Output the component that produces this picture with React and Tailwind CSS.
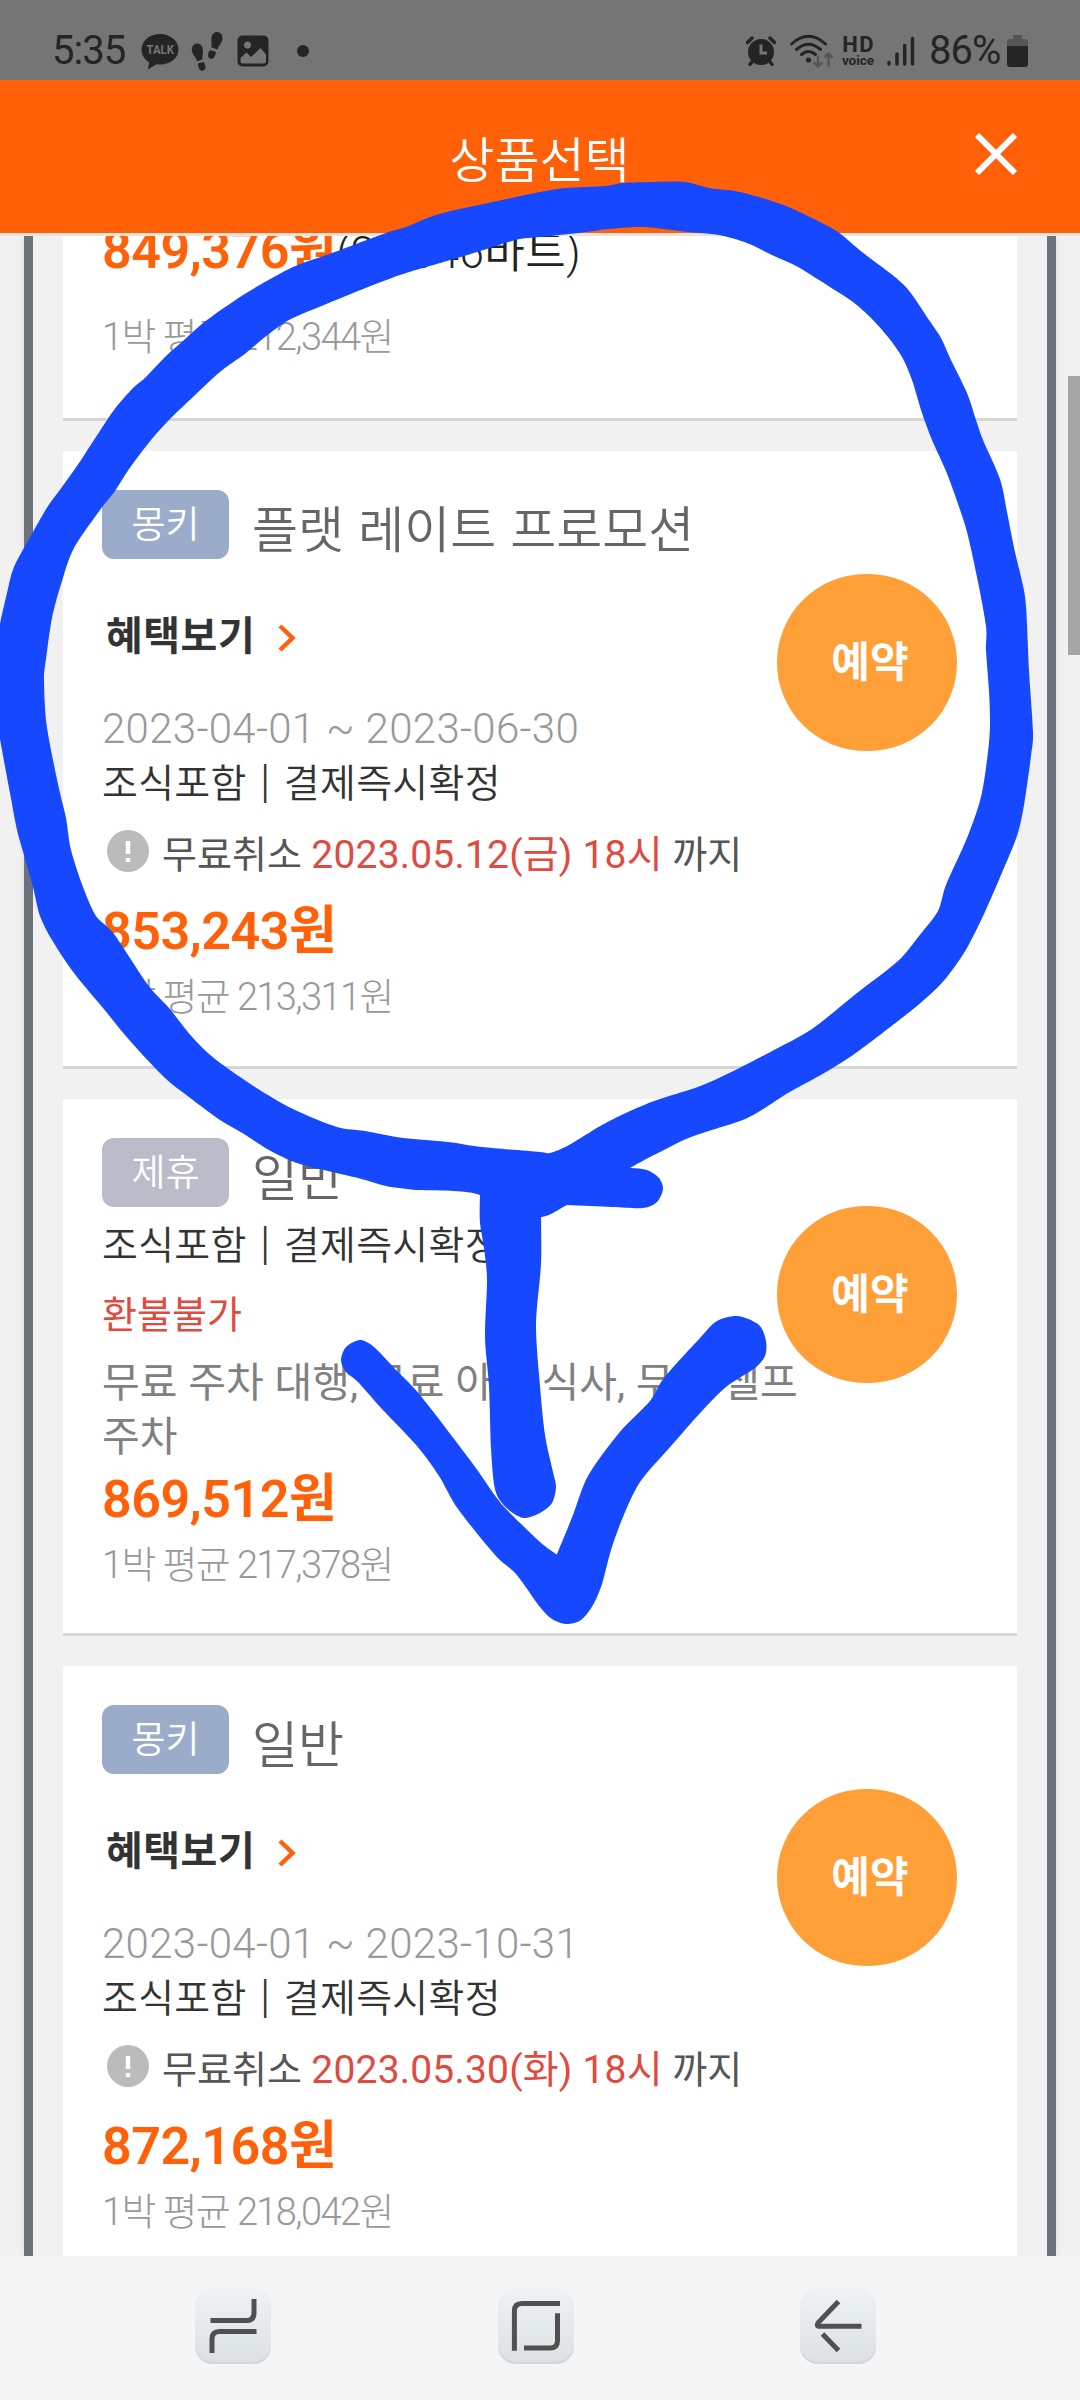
import { useState } from 'react';
import { clsx } from 'clsx';

const RATES = [
  {
    id: 1,
    badge: '몽키',
    badgeColor: 'bg-[#9aacc9]',
    title: '플랫 레이트 프로모션',
    hasBenefit: true,
    period: '2023-04-01 ~ 2023-06-30',
    cancelBefore: '2023.05.12(금) 18시',
    price: '853,243원',
    average: '1박 평균 213,311원',
    height: 'h-[618px]',
    buttonTop: 'top-[123px]'
  },
  {
    id: 2,
    badge: '제휴',
    badgeColor: 'bg-[#babcca]',
    title: '일반',
    note: '무료 주차 대행, 무료 아침 식사, 무료 셀프 주차',
    price: '869,512원',
    average: '1박 평균 217,378원',
    height: 'h-[537px]',
    buttonTop: 'top-[107px]'
  },
  {
    id: 3,
    badge: '몽키',
    badgeColor: 'bg-[#9aacc9]',
    title: '일반',
    hasBenefit: true,
    period: '2023-04-01 ~ 2023-10-31',
    cancelBefore: '2023.05.30(화) 18시',
    price: '872,168원',
    average: '1박 평균 218,042원',
    height: 'h-[618px]',
    buttonTop: 'top-[123px]'
  }
];

// Outlines of the marker strokes, x/y pairs in page pixels
const RING_OUTER = [
  -5, 680, -3, 645, 0, 624, 7, 593, 14, 567, 33, 532, 48, 506, 62, 487, 79, 463, 94, 440, 114, 410, 133, 388,
  146, 377, 165, 357, 184, 340, 207, 320, 248, 292, 293, 267, 332, 253, 386, 233, 406, 227, 430, 217, 451, 211,
  479, 205, 540, 192, 566, 188, 605, 186, 623, 183, 654, 182, 685, 182, 709, 188, 740, 192, 781, 204, 812, 218,
  838, 232, 862, 252, 895, 277, 910, 292, 929, 320, 941, 338, 950, 358, 967, 393, 976, 420, 983, 440, 1000, 479,
  1007, 512, 1015, 552, 1022, 581, 1026, 606, 1029, 671, 1033, 732, 1031, 756, 1024, 805, 1017, 836, 1001, 875,
  984, 914, 967, 948, 953, 969, 938, 987, 912, 1010, 860, 1050, 831, 1069, 808, 1082, 788, 1093, 760, 1111,
  740, 1121, 691, 1137, 660, 1152, 630, 1168, 595, 1190, 567, 1205, 542, 1217, 510, 1212, 480, 1195, 454, 1191,
  417, 1190, 386, 1186, 358, 1178, 300, 1164, 269, 1150, 244, 1134, 220, 1120, 189, 1097, 165, 1078, 131, 1042,
  103, 1008, 74, 973, 52, 940, 40, 916, 33, 887, 24, 855, 17, 830, 10, 793, 2, 750, -4, 715
];
const RING_INNER = [
  151, 440, 129, 469, 115, 491, 100, 510, 74, 548, 62, 581, 52, 618, 46, 659, 44, 679, 46, 720, 52, 755, 60, 793,
  66, 818, 71, 850, 83, 887, 96, 916, 114, 934, 148, 985, 169, 1008, 193, 1038, 215, 1059, 255, 1087, 293, 1109,
  337, 1127, 365, 1131, 403, 1138, 448, 1142, 482, 1147, 540, 1152, 550, 1153, 569, 1145, 602, 1125, 630, 1111,
  657, 1100, 695, 1088, 721, 1077, 755, 1060, 774, 1050, 812, 1029, 857, 993, 898, 961, 919, 936, 938, 911,
  946, 885, 967, 838, 981, 797, 988, 752, 990, 724, 989, 691, 986, 650, 986, 626, 977, 577, 967, 532, 957, 501,
  946, 471, 932, 440, 922, 413, 912, 380, 902, 357, 888, 337, 871, 318, 853, 302, 833, 289, 798, 267, 774, 256,
  747, 243, 719, 235, 688, 232, 643, 227, 609, 229, 578, 233, 540, 237, 520, 239, 499, 245, 461, 257, 406, 273,
  368, 287, 324, 305, 289, 320, 265, 337, 246, 353, 220, 372, 193, 397, 169, 420
];
const RING_TAIL = [
  520, 1165, 600, 1167, 630, 1168, 647, 1170, 659, 1178, 663, 1189, 657, 1202, 643, 1208, 612, 1207, 567, 1205, 520, 1202
];
const ARROW_STEM = [
  482, 1165, 480, 1195, 480, 1223, 484, 1248, 487, 1280, 485, 1337, 489, 1386, 491, 1448, 494, 1484, 499, 1499, 510, 1511,
  524, 1518, 540, 1513, 552, 1503, 556, 1487, 553, 1472, 545, 1435, 540, 1386, 536, 1325, 541, 1264, 541, 1215, 541, 1165
];
const ARROW_HEAD = [
  360, 1340, 346, 1347, 341, 1360, 346, 1372, 358, 1382, 382, 1409, 417, 1446, 439, 1476, 458, 1509, 496, 1556,
  516, 1574, 540, 1607, 552, 1619, 566, 1624, 581, 1620, 593, 1605, 602, 1584, 611, 1550, 623, 1517, 640, 1482,
  671, 1446, 702, 1411, 726, 1387, 755, 1368, 765, 1356, 766, 1341, 759, 1325, 738, 1316, 717, 1321, 700, 1338,
  664, 1378, 650, 1401, 619, 1433, 588, 1476, 573, 1515, 557, 1554, 556, 1554, 540, 1542, 510, 1513, 496, 1497,
  470, 1460, 420, 1395, 396, 1370, 374, 1347
];

// Closed Catmull-Rom spline through the points
function smoothPath(flat) {
  const pts = [];
  for (let i = 0; i < flat.length; i += 2) pts.push([flat[i], flat[i + 1]]);
  const at = (i) => pts[(i + pts.length) % pts.length];
  let d = `M${pts[0][0]} ${pts[0][1]}`;
  pts.forEach((p1, i) => {
    const p0 = at(i - 1);
    const p2 = at(i + 1);
    const p3 = at(i + 2);
    d += `C${p1[0] + (p2[0] - p0[0]) / 7} ${p1[1] + (p2[1] - p0[1]) / 7} ${p2[0] - (p3[0] - p1[0]) / 7} ${p2[1] - (p3[1] - p1[1]) / 7} ${p2[0]} ${p2[1]}`;
  });
  return `${d}Z`;
}

function MarkerDrawing() {
  return (
    <svg
      viewBox="0 0 1080 2400"
      className="absolute inset-0 w-[1080px] h-[2400px] pointer-events-none"
      fill="#1548ff"
    >
      <path fillRule="evenodd" d={smoothPath(RING_OUTER) + smoothPath(RING_INNER)} />
      <path d={smoothPath(RING_TAIL)} />
      <path d={smoothPath(ARROW_STEM)} />
      <path d={smoothPath(ARROW_HEAD)} />
    </svg>
  );
}

function StatusBar() {
  return (
    <div className="h-20 shrink-0 bg-[#757575] text-[#242424] flex items-start justify-between pl-[53px] pr-[52px] pt-[30px]">
      <div className="flex items-center h-[42px]">
        <span className="text-[40px] leading-[44px] w-[77px] -ml-px tracking-[-1px]">5:35</span>
        {/* Talk bubble */}
        <svg className="w-[38px] h-[38px] ml-[12px]" viewBox="0 0 38 38">
          <path
            d="M19 2C8.500 2 .5 8.800.5 17.500c0 5.500 3 10 7.800 12.800L6.800 37.500l8.700-5.300c1.100.2 2.300.3 3.500.3 10.500 0 18.500-6.500 18.500-15S29.500 2 19 2z"
            fill="#242424"
          />
          <text
            x="5.500"
            y="22"
            fontSize="13.500"
            fontWeight="700"
            fill="#757575"
            fontFamily="Roboto, sans-serif"
            textLength="27.500"
            lengthAdjust="spacingAndGlyphs"
          >
            TALK
          </text>
        </svg>
        {/* Footprints */}
        <svg className="w-[32px] h-[42px] ml-[12px]" viewBox="0 0 32 42" fill="#242424">
          <path d="M5.500 13.500c3.500-.8 6.500 2.500 6.500 7.500 0 3-1 5-.5 8.500l-5.500 1.700C5.500 27.500.8 24.500.8 19.500c0-3 1.700-5.500 4.700-6z" />
          <path d="M7 33.500l5.500-1.500c1 1 2 3 2 5.500 0 1.500-1 3-2.800 3.300C9 41.200 7 38 7 33.500z" />
          <path d="M26.500 2c-3.500-.5-6 2.500-6.200 7-.1 3 .7 5 0 8.300l6.200 2.200c1-4 4.700-6 5-11 .2-3.500-2-6.200-5-6.500z" />
          <path d="M25 22l-5.800-2c-1.500 1.500-2.200 3.500-2.200 5.500 0 1.500 1 3 2.800 3.300C22.500 29.200 24.500 26 25 22z" />
        </svg>
        {/* Gallery */}
        <svg className="w-[32px] h-[32px] ml-[14px]" viewBox="0 0 32 32">
          <rect x="0.500" y="0.500" width="31" height="31" rx="5" fill="#242424" />
          <circle cx="10.500" cy="10" r="3.500" fill="#757575" />
          <path d="M3.500 23l6-5.500 4.500 4.500 9.500-9 5.500 6.500v6.500q0 2.500-2.500 2.500h-20.500q-2.500 0-2.500-2.500z" fill="#757575" />
        </svg>
        <span className="size-3 rounded-full bg-[#242424] ml-[28px]" />
      </div>

      <div className="flex items-center h-[42px]">
        {/* Alarm */}
        <svg className="w-[30px] h-[30px]" viewBox="0 0 30 30">
          <circle cx="15" cy="16" r="13" fill="#242424" />
          <path d="M1.500 6.500L6 2M28.500 6.500L24 2M4 28.500l3-4M26 28.500l-3-4" stroke="#242424" strokeWidth="3.500" strokeLinecap="round" />
          <path d="M15 8.500V17h6" fill="none" stroke="#757575" strokeWidth="3" />
        </svg>
        {/* Wifi */}
        <svg className="w-[46px] h-[38px] ml-[13px]" viewBox="0 0 46 38" fill="none">
          <path d="M2.500 12q17-15.500 34 0M7.500 17.500q12-10.500 24 0M12.500 22.500q7-6 14 0" stroke="#242424" strokeWidth="3" strokeLinecap="round" />
          <circle cx="19.500" cy="28" r="2.600" fill="#242424" />
          <path d="M29 24v10M25 30.500l4 4 4-4M39.500 34.500v-12M35.500 25.500l4-4 4 4" stroke="#555" strokeWidth="2.500" />
        </svg>
        <div className="w-8 ml-[7px] flex flex-col items-center font-bold">
          <span className="text-[22px] leading-[18px] tracking-[1.500px] pl-[1.500px]">HD</span>
          <span className="text-[13.500px] leading-[12px]">voice</span>
        </div>
        {/* Signal */}
        <svg className="w-[28px] h-[30px] ml-[13px]" viewBox="0 0 28 30" stroke="#242424" strokeWidth="3.500" strokeLinecap="round">
          <path d="M2 26.500v1.500M10 18v10M17.700 9.500v18.500M25.500 2.500v25.500" />
        </svg>
        <span className="text-[40px] leading-[44px] ml-[14px] w-[72px] tracking-[-1px]">86%</span>
        <svg className="w-[21px] h-[32px] ml-[6px]" viewBox="0 0 21 32">
          <path d="M6 0h9v4h3q3 0 3 3v5H0V7q0-3 3-3h3z" fill="#555" />
          <path d="M0 11h21v18q0 3-3 3H3q-3 0-3-3z" fill="#242424" />
        </svg>
      </div>
    </div>
  );
}

function Header({ title }) {
  return (
    <header className="h-[156px] shrink-0 bg-[#ff6008] border-b-3 border-[#ebe3dc] grid grid-cols-[1fr_auto_1fr] items-start text-white">
      <span />
      <h1 className="text-[49px] leading-[60px] font-[350] mt-[52px] -ml-px">{title}</h1>
      <button className="justify-self-end mt-[53px] mr-[63px]">
        <svg className="size-[42px]" viewBox="0 0 42 42" stroke="#fff" strokeWidth="6">
          <path d="M2 2l38 38M40 2L2 40" />
        </svg>
      </button>
    </header>
  );
}

function Average({ children }) {
  return (
    <p className="text-[38px] leading-[54px] font-light text-[#999] tracking-[-1.600px]">{children}</p>
  );
}

function Price({ children }) {
  return <span className="text-[52px] leading-[66px] font-semibold text-[#ff6008] tracking-[-0.500px]">{children}</span>;
}

function RateCard({ rate }) {
  return (
    <section
      className={clsx('relative shrink-0 bg-white border-b-3 border-[#d6d6d6] pl-[39px] pt-[39px] whitespace-nowrap', rate.height)}
    >
      <div className="flex h-[69px]">
        <span
          className={clsx(
            'w-[127px] h-[69px] rounded-xl text-white text-[37px] leading-[72px] font-[350] text-center',
            rate.badgeColor
          )}
        >
          {rate.badge}
        </span>
        <h2 className="ml-[23px] pt-[7px] text-[50px] leading-[69px] font-[350] text-[#666] [word-spacing:2px]">{rate.title}</h2>
      </div>

      {rate.hasBenefit && (
        <div className="flex items-center h-[60px] mt-[48px] pl-1">
          <span className="text-[40px] leading-[60px] font-bold text-[#333] tracking-[0.500px]">혜택보기</span>
          <svg className="w-[18px] h-[28px] ml-[23px] mt-[1px]" viewBox="0 0 18 28" fill="none" stroke="#ff6008" strokeWidth="4.500">
            <path d="M2 2l12.500 12L2 26" />
          </svg>
        </div>
      )}
      {rate.period && (
        <p className="text-[42px] leading-[54px] font-light text-[#999] tracking-[0.300px] mt-[35px]">{rate.period}</p>
      )}

      <p
        className={clsx(
          'h-[54px] text-[39px] leading-[54px] font-[350] text-[#333] tracking-[0.300px] [word-spacing:3.500px]',
          rate.period ? 'mt-[1px] mb-[1px]' : 'mt-[12px]'
        )}
      >
        조식포함 <span className="text-[46px] leading-none font-light">|</span> 결제즉시확정
      </p>

      {rate.cancelBefore ? (
        <div className="flex items-center h-[54px] mt-[17px] pl-[5px] text-[38px] leading-[54px] text-[#555]">
          <svg className="size-[42px] mr-[13px] -mt-[8px]" viewBox="0 0 42 42">
            <circle cx="21" cy="21" r="21" fill="#bbb" />
            <path d="M21 11v13M21 28v4" stroke="#fff" strokeWidth="4.500" />
          </svg>
          <p>
            무료취소 <span className="text-[39px] text-[#e04a3f] tracking-[0.200px]">{rate.cancelBefore}</span> 까지
          </p>
        </div>
      ) : (
        <p className="text-[38px] leading-[54px] text-[#e04a3f] mt-[15px]">환불불가</p>
      )}

      {rate.note && (
        <p className="w-[712px] whitespace-normal break-keep text-[41px] leading-[53.500px] text-[#808080] [word-spacing:0.700px] mt-[15px]">
          {rate.note}
        </p>
      )}

      <div className={clsx('h-[64px]', rate.note ? 'mt-[3px]' : 'mt-[17px]')}>
        <Price>{rate.price}</Price>
      </div>
      <div className="mt-[7px]">
        <Average>{rate.average}</Average>
      </div>

      <button
        className={clsx(
          'absolute right-[60px] w-[180px] h-[177px] rounded-full bg-[#ff9f37] text-white text-[42px] font-bold pl-1.5',
          rate.buttonTop
        )}
      >
        예약
      </button>
    </section>
  );
}

function NavKey({ children, onClick }) {
  return (
    <button
      onClick={onClick}
      className="size-[76px] rounded-[18px] bg-linear-to-b from-[#edf3f6] to-[#dbe0e1] shadow-[inset_0_-2px_0_#d0d5e4]"
    >
      <svg className="size-[76px]" viewBox="0 0 76 76" fill="none" stroke="#505050" strokeWidth="5">
        {children}
      </svg>
    </button>
  );
}

export default function App() {
  const [open, setOpen] = useState(true);

  return (
    <div
      lang="ko"
      className="relative w-[1080px] h-[2400px] flex flex-col overflow-hidden bg-[#f1f1f1] font-[Roboto,'Noto_Sans_CJK_KR',sans-serif]"
    >
      <StatusBar />
      <Header title="상품선택" />

      {/* Product list */}
      <main className="flex h-[2020px] shrink-0 overflow-hidden pl-6">
        {open && (
          <div className="w-[1032px] border-x-9 border-[#6c727b] px-[30px] flex flex-col gap-[30px] shadow-[0_0_8px_rgba(0,0,0,0.08)]">
            <section className="h-[185px] shrink-0 overflow-hidden bg-white border-b-3 border-[#d6d6d6] pl-[39px] pb-[54px] flex flex-col justify-end gap-[28px] whitespace-nowrap">
              <p className="h-[64px] shrink-0 leading-[64px]">
                <Price>849,376원</Price>
                <span className="text-[44px] leading-[64px] font-[350] text-[#222] tracking-[0.500px]">(22,346바트)</span>
              </p>
              <Average>1박 평균 212,344원</Average>
            </section>
            {RATES.map((rate) => (
              <RateCard key={rate.id} rate={rate} />
            ))}
          </div>
        )}
        <div className="w-3 h-[279px] ml-3 mt-[140px] bg-[#a5a5a5]" />
      </main>

      {/* System navigation */}
      <nav className="h-[144px] shrink-0 bg-[#f5f5f5] flex justify-between pt-8 pl-[195px] pr-[204px]">
        <NavKey>
          <path d="M59 11v14q0 7.500-7.500 7.500h-36M61.500 43.500h-37q-7.500 0-7.500 7.500v14" />
        </NavKey>
        <NavKey>
          <path d="M16.400 62.700V23q0-7.600 7.600-7.600h38M59.500 25.300v27.200q0 7.500-7.500 7.500H26" />
        </NavKey>
        <NavKey onClick={() => setOpen(true)}>
          <path d="M38.500 13.500L18.500 34.300Q15.500 38.300 20 38.300h41.500M22.500 46l16 16.500" />
        </NavKey>
      </nav>

      <MarkerDrawing />
    </div>
  );
}
